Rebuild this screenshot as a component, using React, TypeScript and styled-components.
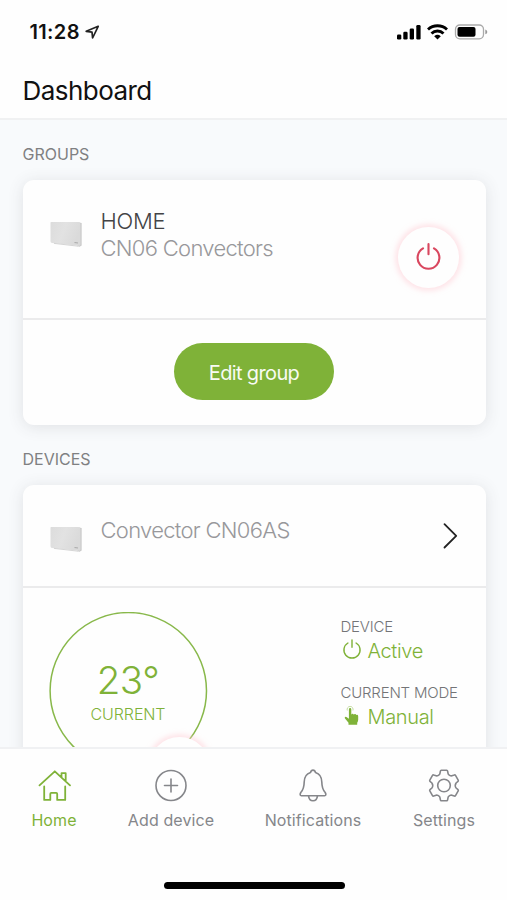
import React from 'react';
import styled, { createGlobalStyle } from 'styled-components';

const green = '#7fb238';
const gray = '#85868a';

const GlobalStyle = createGlobalStyle`
  * { box-sizing: border-box; }
  html, body { margin: 0; padding: 0; background: #fefefe; }
  body { font-family: Inter, "Liberation Sans", sans-serif; overflow: hidden; }
  svg { display: block; flex: none; }
`;

const Screen = styled.div`
  width: 507px;
  height: 900px;
  display: flex;
  flex-direction: column;
  overflow: hidden;
  background: #fefefe;
`;

const StatusBar = styled.div`
  height: 64px;
  flex: none;
  display: flex;
  align-items: center;
  padding: 0 18px 0 29.5px;
`;

const Clock = styled.span`
  font-size: 20px;
  font-weight: 600;
  line-height: 24px;
  letter-spacing: 0.35px;
  width: 55.5px;
  white-space: nowrap;
  color: #111;
`;

const Indicators = styled.div`
  margin-left: auto;
`;

const TitleBar = styled.header`
  height: 56px;
  flex: none;
  padding: 11px 23px 0 22.5px;
  border-bottom: 2px solid #f0f1f2;
`;

const Title = styled.h1`
  margin: 0;
  font-size: 26px;
  line-height: 32px;
  font-weight: 400;
  letter-spacing: -0.55px;
  color: #111;
`;

const Content = styled.main`
  height: 627px;
  flex: none;
  overflow: hidden;
  background: #f8fafc;
  padding: 0 21.5px 0 22.5px;
`;

const SectionLabel = styled.h2`
  margin: 0;
  height: 60px;
  padding-top: 23px;
  font-size: 16px;
  line-height: 22px;
  font-weight: 400;
  color: #7f8082;
`;

const Card = styled.section<{ $height: number }>`
  height: ${(p) => p.$height}px;
  border-radius: 11px;
  background: #fefefe;
  box-shadow: 0 2px 16px rgba(60, 65, 70, 0.13);
`;

const GroupHead = styled.div`
  height: 139.5px;
  display: flex;
  align-items: flex-start;
  border-bottom: 2px solid #ebebec;
  padding: 27px 25px 0 26px;
`;

const DeviceHead = styled.div`
  height: 103px;
  display: flex;
  align-items: flex-start;
  border-bottom: 2px solid #ebebec;
  padding: 31px 27px 0 26px;
`;

const Thumb = styled.div<{ $top: number }>`
  width: 52px;
  flex: none;
  padding-top: ${(p) => p.$top}px;
`;

const Names = styled.div`
  flex: 1;
  padding-top: 1px;
  font-size: 22px;
  line-height: 27px;
  font-weight: 300;
  white-space: nowrap;
`;

const GroupName = styled.div`
  color: #434345;
  letter-spacing: -0.3px;
`;

const ModelName = styled.div`
  color: #98989b;
  letter-spacing: -0.7px;
`;

const PowerButton = styled.button`
  width: 61px;
  height: 61px;
  margin-top: 20px;
  margin-right: 2px;
  padding: 0 0 2px;
  border: 0;
  border-radius: 50%;
  background: #fefefe;
  box-shadow: 0 0 5px 3px rgba(255, 205, 213, 0.5);
  display: flex;
  align-items: center;
  justify-content: center;
`;

const CardAction = styled.div`
  display: flex;
  justify-content: center;
  padding-top: 23.5px;
`;

const EditButton = styled.button`
  width: 160px;
  height: 57px;
  border: 0;
  border-radius: 29px;
  background: ${green};
  color: #f8fbf3;
  font: 400 20px/24px Inter, sans-serif;
  letter-spacing: -0.65px;
  padding: 2px 0 0;
`;

const DeviceBody = styled.div`
  display: flex;
  justify-content: space-between;
  padding: 24px 27px 0 26.5px;
`;

const Dial = styled.div`
  position: relative;
  width: 158px;
  height: 200px;
  display: flex;
  flex-direction: column;
  align-items: center;
`;

const DialRing = styled.svg`
  position: absolute;
  left: 0;
  top: 0;
`;

const DialKnob = styled.div`
  position: absolute;
  left: 100px;
  top: 125px;
  width: 61px;
  height: 61px;
  border-radius: 50%;
  background: #fefefe;
  box-shadow: 0 0 5px 3px rgba(255, 205, 213, 0.5);
`;

const Temperature = styled.div`
  margin-top: 46px;
  font-size: 38.5px;
  line-height: 44px;
  font-weight: 300;
  letter-spacing: -0.6px;
  color: ${green};
`;

const DialCaption = styled.div`
  margin-top: 1px;
  font-size: 16px;
  line-height: 22px;
  font-weight: 300;
  letter-spacing: -0.1px;
  color: ${green};
`;

const Facts = styled.dl`
  width: 118px;
  margin: 4px 0 0;
  white-space: nowrap;
`;

const FactLabel = styled.dt`
  font-size: 15px;
  line-height: 22px;
  font-weight: 300;
  letter-spacing: -0.2px;
  color: #737477;
`;

const FactValue = styled.dd`
  margin: 0 0 18px;
  height: 26px;
  display: flex;
  align-items: center;
  font-size: 20px;
  line-height: 26px;
  font-weight: 300;
  letter-spacing: -0.35px;
  color: ${green};
`;

const FactIcon = styled.span`
  width: 27px;
  height: 24px;
  padding-left: 1px;
  flex: none;
`;

const TabBar = styled.nav`
  height: 153px;
  flex: none;
  border-top: 2px solid #f0f1f3;
  background: #fefefe;
  display: grid;
  grid-template-columns: 108px 126px 158px 104px;
  grid-template-rows: 134px 6px;
`;

const Tab = styled.a<{ $active?: boolean }>`
  display: flex;
  flex-direction: column;
  align-items: center;
  padding-top: 20px;
  gap: 6px;
  color: ${(p) => (p.$active ? green : gray)};
  font-size: 16px;
  line-height: 22px;
  letter-spacing: 0.1px;
  white-space: nowrap;
`;

const HomeIndicator = styled.div`
  grid-column: 1 / -1;
  width: 181px;
  height: 7px;
  margin-left: 164px;
  margin-top: -1px;
  border-radius: 4px;
  background: #000;
`;

const PowerIcon = ({ size, color, stroke }: { size: number; color: string; stroke: number }) => (
  <svg width={size} height={size} viewBox="0 0 28 28" fill="none" stroke={color} strokeWidth={stroke} strokeLinecap="round">
    <path d="M8.3 5.6a11.3 11.3 0 1 0 11.4 0M14 1.2v10.4" />
  </svg>
);

const ConvectorPicture = ({ id }: { id: string }) => (
  <svg width="36" height="28" viewBox="0 0 36 28">
    <defs>
      <linearGradient id={id} x1="0" y1="0" x2="1" y2="0.3">
        <stop offset="0" stopColor="#dcdcdc" />
        <stop offset="0.5" stopColor="#e2e2e2" />
        <stop offset="1" stopColor="#dadada" />
      </linearGradient>
    </defs>
    <path d="M30 1.5 32.600 2v22.500l-2 1.300-2-.6z" fill="#c8c8c8" />
    <path d="M2 1h27.500q2 0 2 2v20.500q0 1.500-1.500 1.300L3 22q-1.500-.2-1.500-1.700V2Q1.500 1 2 1z" fill={`url(#${id})`} />
    <path d="M25.500 21.500l3.500.5" stroke="#aaa" strokeWidth="1.200" />
    <path d="M5 22.400l24 2.800" stroke="#ccc" strokeWidth=".8" />
  </svg>
);

const StatusIcons = () => (
  <svg width="94" height="18" viewBox="0 0 94 18">
    <rect x="2" y="11.500" width="4.300" height="5" rx="1.300" />
    <rect x="8.300" y="8.700" width="4.300" height="7.800" rx="1.300" />
    <rect x="14.700" y="5.500" width="4.300" height="11" rx="1.300" />
    <rect x="21.300" y="2" width="4.300" height="14.500" rx="1.300" />
    <g fill="none" stroke="#000" strokeWidth="2.900">
      <path d="M33 6.500a14 14 0 0 1 19 0" />
      <path d="M36.500 10.500a8.600 8.600 0 0 1 12 0" />
    </g>
    <path d="M39.200 13.200a5 5 0 0 1 6.600 0L42.500 16.600z" />
    <rect x="60.500" y="2" width="28" height="13.800" rx="4.300" fill="none" stroke="#aaa" strokeWidth="1.300" />
    <rect x="62.500" y="4" width="18" height="9.800" rx="2" />
    <path d="M90.300 6.500v4.800q2-.6 2-2.400t-2-2.400z" fill="#999" />
  </svg>
);

const LocationIcon = () => (
  <svg width="15" height="15" viewBox="0 0 15 15" fill="none" stroke="#222" strokeWidth="1.700" strokeLinejoin="round">
    <path d="M13.200 1.300 1.200 6.300l5.800.8.600 5.900z" />
  </svg>
);

const HandIcon = () => (
  <svg width="22" height="22" viewBox="0 0 22 22" fill={green}>
    <path d="M6.900 4.500q0-1.400 1.200-1.400T9.300 4.500v5.200q.4-1.100 1.300-1 1 .1 1.200 1 .4-.7 1.300-.6.900.1 1.100 1 .4-.5 1.100-.3.900.2.900 1.600v3.200q0 1.800-1 3.100v2H6.500v-1.900L3 13.500q-.7-.9.100-1.500.8-.5 1.700.3l2.100 1.500z" />
    <path d="M5.300 5.500a3 3 0 1 1 5.600 0" fill="none" stroke={green} strokeWidth=".8" opacity=".55" />
  </svg>
);

const tabIcon = { width: 34, height: 34, viewBox: '0 0 34 34', fill: 'none', stroke: 'currentColor', strokeLinecap: 'round', strokeLinejoin: 'round' } as const;

const HouseIcon = () => (
  <svg {...tabIcon} strokeWidth="1.800">
    <path d="M2.500 16.300 17.800 2.300 33 16.300M24.500 8V4.200h4.200v8.200M7.200 17.500v13.400h6.100v-6q0-1 1-1h4.900q1 0 1 1v6h8V17.500" />
  </svg>
);

const AddIcon = () => (
  <svg {...tabIcon} strokeWidth="1.600">
    <circle cx="17" cy="16.500" r="15" />
    <path d="M17 10v13M10.500 16.500h13" />
  </svg>
);

const BellIcon = () => (
  <svg {...tabIcon} strokeWidth="1.600">
    <path d="M14.500 3.500q.6-2.400 2.500-2.400t2.500 2.400q6.200 2 6.300 9.500.1 7 3.400 10.500 1.600 3-.7 3.200h-23q-2.300-.2-.7-3.200Q8.100 20 8.200 13q.1-7.500 6.300-9.500zM12.500 26.900q.6 4.900 4.500 4.900t4.500-4.900" />
  </svg>
);

const GearIcon = () => (
  <svg {...tabIcon} strokeWidth="1.600">
    <path d="M14.300 1.300h5.400q.8 0 .9.800l.5 2.500q.2 1 1.200 1.500l.8.500q.9.500 1.800.2l2.400-.8q.8-.3 1.200.4l2.700 4.700q.4.700-.2 1.200l-1.900 1.700q-1.700 2.500 0 5l1.900 1.700q.6.500.2 1.200l-2.700 4.700q-.4.700-1.200.4l-2.400-.8q-.9-.3-1.800.2l-.8.500q-1 .5-1.200 1.500l-.5 2.500q-.1.800-.9.800h-5.400q-.8 0-.9-.8l-.5-2.500q-.2-1-1.200-1.500l-.8-.5q-.9-.5-1.800-.2l-2.400.8q-.8.3-1.200-.4l-2.700-4.700q-.4-.7.200-1.200L4.900 19q1.700-2.500 0-5L3 12.300q-.6-.5-.2-1.200l2.700-4.700q.4-.7 1.200-.4l2.400.8q.9.300 1.800-.2l.8-.5q1-.5 1.200-1.500l.5-2.500q.1-.8.900-.8z" />
    <circle cx="17" cy="16.500" r="6.300" />
  </svg>
);

export default function App() {
  return (
    <Screen>
      <GlobalStyle />
      <StatusBar>
        <Clock>11:28</Clock>
        <LocationIcon />
        <Indicators><StatusIcons /></Indicators>
      </StatusBar>
      <TitleBar><Title>Dashboard</Title></TitleBar>
      <Content>
        <SectionLabel>GROUPS</SectionLabel>
        <Card $height={245}>
          <GroupHead>
            <Thumb $top={14}><ConvectorPicture id="groupPanel" /></Thumb>
            <Names>
              <GroupName>HOME</GroupName>
              <ModelName>CN06 Convectors</ModelName>
            </Names>
            <PowerButton aria-label="Power"><PowerIcon size={27} color="#d9475f" stroke={2.2} /></PowerButton>
          </GroupHead>
          <CardAction><EditButton>Edit group</EditButton></CardAction>
        </Card>
        <SectionLabel>DEVICES</SectionLabel>
        <Card $height={420}>
          <DeviceHead>
            <Thumb $top={10}><ConvectorPicture id="devicePanel" /></Thumb>
            <Names><ModelName>Convector CN06AS</ModelName></Names>
            <svg width="16" height="40" viewBox="0 0 16 40" fill="none" stroke="#222" strokeWidth="1.800" strokeLinecap="round" strokeLinejoin="round">
              <path d="M1.500 8.200 13.200 19.900 1.500 31.500" />
            </svg>
          </DeviceHead>
          <DeviceBody>
            <Dial>
              <DialRing width="159" height="159" viewBox="0 0 159 159">
                <circle cx="79.300" cy="78.800" r="78.200" fill="none" stroke="#88b84a" strokeWidth="1.500" />
              </DialRing>
              <Temperature>23°</Temperature>
              <DialCaption>CURRENT</DialCaption>
              <DialKnob />
            </Dial>
            <Facts>
              <FactLabel>DEVICE</FactLabel>
              <FactValue><FactIcon><PowerIcon size={20} color={green} stroke={2} /></FactIcon>Active</FactValue>
              <FactLabel>CURRENT MODE</FactLabel>
              <FactValue><FactIcon><HandIcon /></FactIcon>Manual</FactValue>
            </Facts>
          </DeviceBody>
        </Card>
      </Content>
      <TabBar>
        <Tab $active><HouseIcon />Home</Tab>
        <Tab><AddIcon />Add device</Tab>
        <Tab><BellIcon />Notifications</Tab>
        <Tab><GearIcon />Settings</Tab>
        <HomeIndicator />
      </TabBar>
    </Screen>
  );
}
